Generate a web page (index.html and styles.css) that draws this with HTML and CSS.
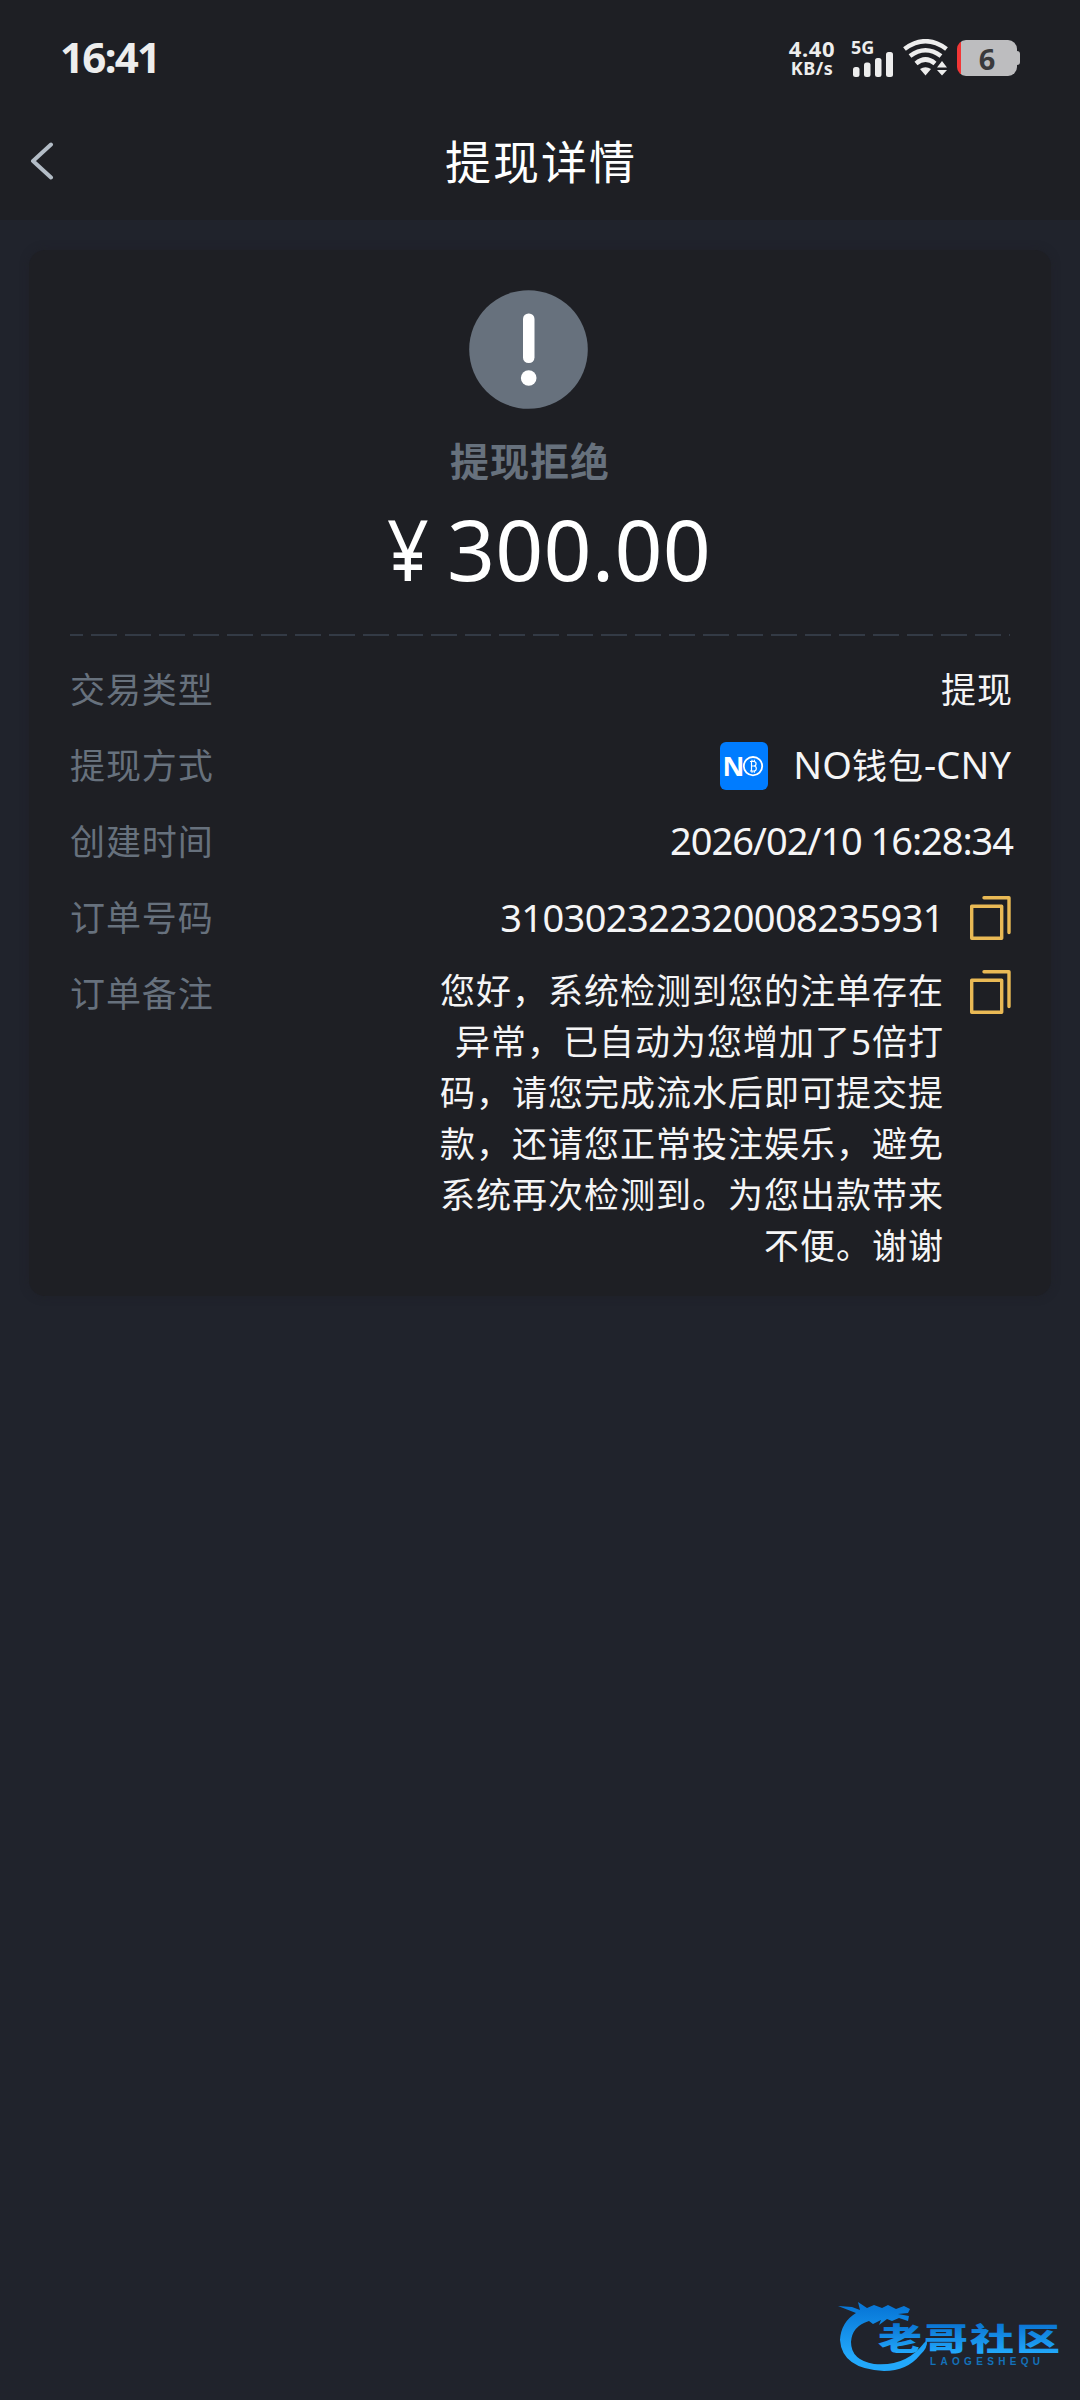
FILE: index.html
```html
<!DOCTYPE html>
<html lang="zh-CN">
<head>
<meta charset="utf-8">
<title>提现详情</title>
<link rel="stylesheet" href="styles.css">
</head>
<body>
<header class="top">
  <div class="status">
    <span class="clock">16:41</span>
    <div class="indicators">
      <div class="speed"><span class="rate">4.40</span><span class="unit">KB/s</span></div>
      <div class="signal">
        <span class="net">5G</span>
        <svg class="bars" width="41" height="25" viewBox="0 0 41 25" fill="#ededed">
          <rect x="0" y="15" width="6.500" height="10" rx="2.500"/><rect x="11" y="10.500" width="6.500" height="14.500" rx="2.500"/><rect x="22" y="6" width="6.500" height="19" rx="2.500"/><rect x="33" y="0" width="7" height="25" rx="2.500"/>
        </svg>
      </div>
      <svg class="wifi" width="46" height="38" viewBox="0 0 46 38">
        <g fill="none" stroke="#ededed" stroke-width="4.600">
          <path d="M1.500 10Q22.500-5.500 43.500 10"/><path d="M7 17Q22.500 5.500 38 17"/><path d="M13 24.500Q22.500 16.500 32 24.500"/>
        </g>
        <path d="M17 30Q22.500 26.500 28 30L22.500 36.500Z" fill="#ededed"/>
        <path d="M34 28.500L39 22L44 28.500ZM34 31L39 36.500L44 31Z" fill="#ededed"/>
      </svg>
      <div class="battery"><span>6</span></div>
    </div>
  </div>
  <nav class="bar">
    <svg class="back" width="24" height="38" viewBox="0 0 24 38"><path d="M21 2.500L3 19L21 35.500" fill="none" stroke="#b3bcc6" stroke-width="4" stroke-linecap="round" stroke-linejoin="round"/></svg>
    <h1 class="title">提现详情</h1>
  </nav>
</header>
<main class="card">
  <section class="summary">
    <svg class="alert" width="119" height="119" viewBox="0 0 119 119"><circle cx="59.500" cy="59.500" r="59.300" fill="#67717d"/><rect x="54" y="23.500" width="11.500" height="49.500" rx="5.500" fill="#fff"/><circle cx="59.700" cy="88" r="7.800" fill="#fff"/></svg>
    <p class="state">提现拒绝</p>
    <p class="amount"><span class="yen">¥</span>300.00</p>
  </section>
  <div class="divider"></div>
  <dl class="rows">
    <div class="row"><dt>交易类型</dt><dd>提现</dd></div>
    <div class="row"><dt>提现方式</dt><dd class="wallet">
      <svg width="48" height="48" viewBox="0 0 48 48"><rect width="48" height="48" rx="6" fill="#007cff"/><text class="n" x="2.500" y="33.700">N</text><circle cx="33" cy="24.200" r="9.200" fill="none" stroke="#fff" stroke-width="1.800"/><path d="M30 19.500H33.800A2.200 2.200 0 0 1 33.800 24H31.500M33.800 24A2.400 2.400 0 0 1 33.800 29H30M31.500 19.500V29M32 17.700V19.500M34.300 17.700V19.500M32 29V30.800M34.300 29V30.800" fill="none" stroke="#fff" stroke-width="1.200"/></svg>
      <span class="name"><b>NO</b>钱包<b>-CNY</b></span></dd></div>
    <div class="row"><dt>创建时间</dt><dd class="date">2026/02/10 16:28:34</dd></div>
    <div class="row"><dt>订单号码</dt><dd class="number">310302322320008235931</dd>
      <svg class="copy" width="41" height="44" viewBox="0 0 41 44"><path d="M1.700 10.300H31.700V42.200H1.700ZM14 1.800H39V36.500" fill="none" stroke="#e9b955" stroke-width="3.400" stroke-linecap="round" stroke-linejoin="round"/></svg></div>
    <div class="row note"><dt>订单备注</dt><dd>您好，系统检测到您的注单存在<br>异常，已自动为您增加了5倍打<br>码，请您完成流水后即可提交提<br>款，还请您正常投注娱乐，避免<br>系统再次检测到。为您出款带来<br>不便。谢谢</dd>
      <svg class="copy" width="41" height="44" viewBox="0 0 41 44"><path d="M1.700 10.300H31.700V42.200H1.700ZM14 1.800H39V36.500" fill="none" stroke="#e9b955" stroke-width="3.400" stroke-linecap="round" stroke-linejoin="round"/></svg></div>
  </dl>
</main>
<div class="watermark">
  <svg width="226" height="80" viewBox="0 0 226 80">
    <defs><linearGradient id="g" x1="0" y1="0" x2="0" y2="80" gradientUnits="userSpaceOnUse"><stop offset="0.150" stop-color="#0878d8"/><stop offset="0.750" stop-color="#22a8fb"/></linearGradient>
    <linearGradient id="t" x1="0" y1="-38" x2="0" y2="4" gradientUnits="userSpaceOnUse"><stop offset="0" stop-color="#0a74d2"/><stop offset="1" stop-color="#22a8fb"/></linearGradient></defs>
    <path fill="url(#g)" d="M0 10L14 11L22 14L20 6L29 12L36 9L44 12L50 9L58 13L66 10L72 13L70 17L60 18L71 20L70 25L61 22L54 25L49 23L41 29L43 24L35 28L31 25Q14 30 13 46Q13 64 36 68Q68 71 86 47L89 44Q90 52 82 59Q69 75 46 75Q4 73 2 44Q3 26 18 17Z"/>
    <text class="brand" transform="translate(40 54) scale(1 .7)" textLength="182" fill="url(#t)">老哥社区</text>
    <text class="latin" x="92" y="68.500" textLength="110" fill="#1471b8">LAOGESHEQU</text>
  </svg>
</div>
</body>
</html>
```
FILE: styles.css
```css
* { box-sizing: border-box; margin: 0; padding: 0; }
body { width: 1080px; height: 2400px; position: relative; overflow: hidden; background: #20232c; color: #f5f5f6; font-family: "Noto Sans", "Noto Sans CJK SC", sans-serif; }
svg { display: block; flex: none; }
.top { height: 220px; background: #1e1f24; }
.status { height: 116px; display: flex; justify-content: space-between; align-items: center; padding: 0 60px; color: #ededed; }
.clock { font-size: 42px; font-weight: 700; letter-spacing: -1.700px; margin-bottom: 3px; }
.indicators { display: flex; align-items: center; height: 38px; }
.speed { display: flex; flex-direction: column; align-items: center; width: 52px; font-weight: 700; margin-top: -3px; }
.rate { font-size: 22px; line-height: 22px; letter-spacing: .700px; }
.unit { font-size: 18px; line-height: 18px; letter-spacing: .500px; }
.signal { width: 42px; height: 37px; margin-left: 15px; position: relative; display: flex; align-items: flex-end; }
.net { position: absolute; left: -2px; top: -2px; font-size: 18px; line-height: 18px; font-weight: 700; }
.wifi { margin: 0 8px 0 8px; }
.battery { width: 60px; height: 36px; border-radius: 9px; background: linear-gradient(90deg, #f23636 0 4px, #bdbdbf 4px); position: relative; display: flex; align-items: center; justify-content: center; margin-right: 3px; }
.battery::after { content: ""; position: absolute; right: -3px; top: 11px; width: 4px; height: 14px; border-radius: 0 3px 3px 0; background: #bdbdbf; }
.battery span { color: #3a3a3c; font-size: 29px; font-weight: 700; }
.bar { height: 104px; display: grid; grid-template-columns: 120px 1fr 120px; align-items: center; padding-bottom: 15px; }
.back { margin-left: 30px; }
.title { text-align: center; font-family: "Noto Sans CJK SC", sans-serif; font-size: 46px; line-height: 60px; font-weight: 400; letter-spacing: 2px; margin: 0 0 3px 2px; color: #fff; }
.card { width: 1022px; height: 1046px; margin: 30px 0 0 29px; padding: 40px 40px 0 41px; border-radius: 16px; background: #1e1f24; box-shadow: 0 0 10px rgba(30, 31, 36, .4); }
.summary { height: 344px; display: flex; flex-direction: column; align-items: center; }
.alert { margin-right: 24px; }
.state { margin: 25px 21px 0 0; font-family: "Noto Sans CJK SC", sans-serif; font-size: 39px; line-height: 50px; font-weight: 700; letter-spacing: 1px; color: #67717d; }
.amount { margin: 5px 0 0 14px; font-size: 84px; line-height: 120px; letter-spacing: .2px; color: #fff; }
.yen { display: inline-block; width: 59px; margin-right: 4px; transform: translateX(3px) scaleX(.87); transform-origin: left; }
.divider { height: 2px; background: repeating-linear-gradient(90deg, #333a45 0 26px, transparent 26px 34px) -13px 0 / 1020px 2px; margin-right: 1px; }
.rows { padding-top: 16px; }
.row { height: 76px; display: flex; align-items: center; font-size: 35px; }
dt { font-family: "Noto Sans CJK SC", sans-serif; letter-spacing: .900px; color: #67717d; flex: 1; margin-bottom: 5px; }
dd { font-family: "Noto Sans", "Noto Sans CJK SC", sans-serif; letter-spacing: 1px; text-align: right; margin: 0 -2px 5px 0; }
.wallet { display: flex; align-items: center; gap: 25px; margin: 0 0 1px; }
.name { line-height: 48px; margin-bottom: 1px; }
.name b { font-weight: 400; font-size: 38px; letter-spacing: .100px; }
.date, .number { font-size: 38px; letter-spacing: -1.050px; margin-bottom: 2px; }
.date { margin-bottom: 4px; }
.number { letter-spacing: -.600px; }
.copy { margin-left: 28px; }
.note { height: 320px; align-items: flex-start; padding-top: 9px; }
.note dd { margin-right: -3px; }
.note .copy { margin: 5px 0 0 29px; }
.note dt, .note dd { line-height: 51.100px; }
.note dt { padding-top: 1px; }
.n { font: 700 27px "Noto Sans", sans-serif; fill: #fff; }
.watermark { position: absolute; left: 838px; top: 2296px; }
.brand { font: 900 44px "Noto Sans CJK SC", sans-serif; }
.latin { font: 700 10px "Liberation Sans", sans-serif; }
```
